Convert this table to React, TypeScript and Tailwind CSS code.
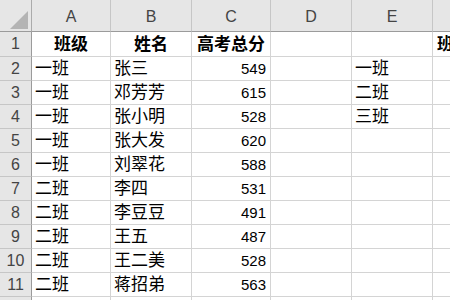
const cols = ["A", "B", "C", "D", "E", "F"];

type Row = { a: string; b: string; c: string; d: string; e: string; f: string; bold?: boolean };

const rows: Row[] = [
  { a: "班级", b: "姓名", c: "高考总分", d: "", e: "", f: "班级", bold: true },
  { a: "一班", b: "张三", c: "549", d: "", e: "一班", f: "" },
  { a: "一班", b: "邓芳芳", c: "615", d: "", e: "二班", f: "" },
  { a: "一班", b: "张小明", c: "528", d: "", e: "三班", f: "" },
  { a: "一班", b: "张大发", c: "620", d: "", e: "", f: "" },
  { a: "一班", b: "刘翠花", c: "588", d: "", e: "", f: "" },
  { a: "二班", b: "李四", c: "531", d: "", e: "", f: "" },
  { a: "二班", b: "李豆豆", c: "491", d: "", e: "", f: "" },
  { a: "二班", b: "王五", c: "487", d: "", e: "", f: "" },
  { a: "二班", b: "王二美", c: "528", d: "", e: "", f: "" },
  { a: "二班", b: "蒋招弟", c: "563", d: "", e: "", f: "" },
];

const font = { fontFamily: '"Liberation Sans", "Noto Sans CJK SC", sans-serif' };

export default function App() {
  return (
    <div className="w-[450px] h-[300px] overflow-hidden bg-white text-black" style={font}>
      <div className="grid w-max grid-cols-[32px_79px_81px_79px_81px_81px_90px]">
        {/* column header row */}
        <div className="relative h-[32px] bg-[#e6e6e6] border-r border-b border-r-[#ababab] border-b-[#9b9b9b]">
          <svg className="absolute left-0 top-0" width="32" height="32" viewBox="0 0 32 32">
            <polygon points="28,11 28,29 10,29" fill="#b4b4b4" />
          </svg>
        </div>
        {cols.map((c) => (
          <div
            key={c}
            className="h-[32px] bg-[#e6e6e6] border-r border-b border-r-[#c6c6c6] border-b-[#9b9b9b] flex items-center justify-center pt-[3px] text-[16px] text-[#444]"
          >
            {c}
          </div>
        ))}

        {rows.map((r, i) => {
          const h = i === 0 ? "h-[25px]" : "h-[24px]";
          const weight = r.bold ? "font-bold" : "";
          return [
            <div
              key={`h${i}`}
              className={`${h} bg-[#e6e6e6] border-r border-b border-r-[#9b9b9b] border-b-[#c6c6c6] flex items-center justify-center text-[16px] text-[#444]`}
            >
              {i + 1}
            </div>,
            <div
              key={`a${i}`}
              className={`${h} border-r border-b border-[#d4d4d4] flex items-center text-[17px] leading-none ${weight} ${r.bold ? "justify-center" : "pl-[3px]"}`}
            >
              {r.a}
            </div>,
            <div
              key={`b${i}`}
              className={`${h} border-r border-b border-[#d4d4d4] flex items-center text-[17px] leading-none ${weight} ${r.bold ? "justify-center" : "pl-[3px]"}`}
            >
              {r.b}
            </div>,
            <div
              key={`c${i}`}
              className={`${h} border-r border-b border-[#d4d4d4] flex items-center leading-none ${r.bold ? "justify-center text-[17px] font-bold whitespace-nowrap" : "justify-end pr-[4px] text-[15px]"}`}
            >
              {r.c}
            </div>,
            <div key={`d${i}`} className={`${h} border-r border-b border-[#d4d4d4]`} />,
            <div
              key={`e${i}`}
              className={`${h} border-r border-b border-[#d4d4d4] flex items-center pl-[3px] text-[17px] leading-none`}
            >
              {r.e}
            </div>,
            <div
              key={`f${i}`}
              className={`${h} border-r border-b border-[#d4d4d4] flex items-center pl-[4px] text-[17px] leading-none whitespace-nowrap ${weight}`}
            >
              {r.f}
            </div>,
          ];
        })}

        {/* partial row 12 */}
        <div className="h-[6px] bg-[#e6e6e6] border-r border-r-[#9b9b9b]" />
        <div className="h-[6px] border-r border-[#d4d4d4]" />
        <div className="h-[6px] border-r border-[#d4d4d4]" />
        <div className="h-[6px] border-r border-[#d4d4d4]" />
        <div className="h-[6px] border-r border-[#d4d4d4]" />
        <div className="h-[6px] border-r border-[#d4d4d4]" />
        <div className="h-[6px] border-r border-[#d4d4d4]" />
      </div>
    </div>
  );
}
